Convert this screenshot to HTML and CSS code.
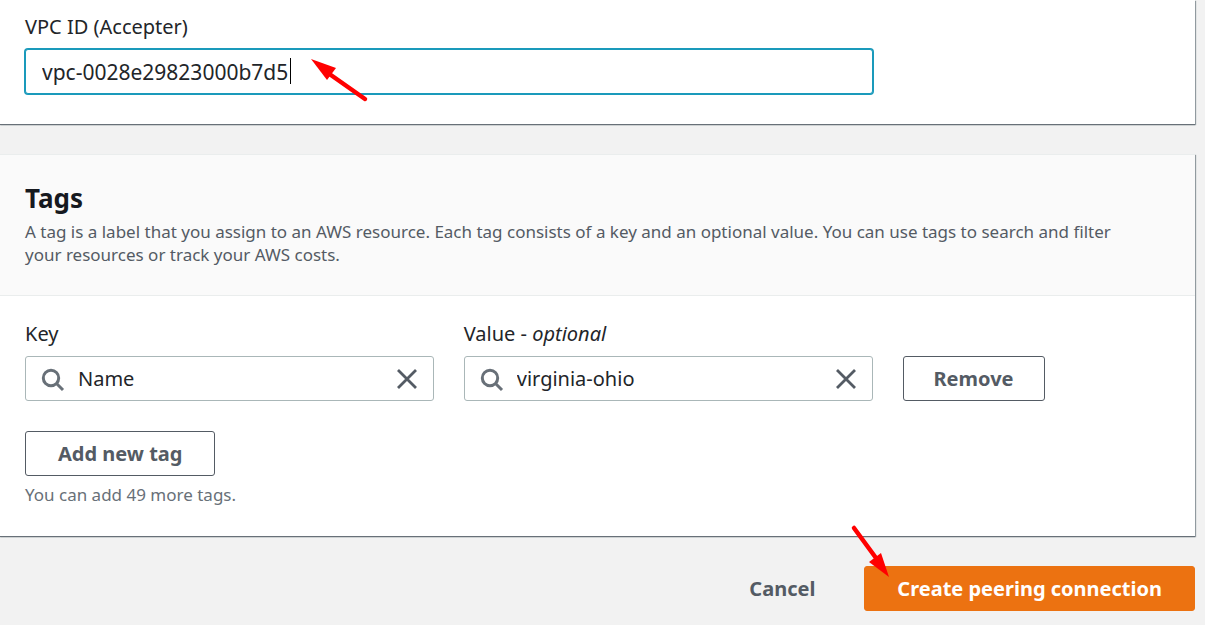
FILE: index.html
```html
<!DOCTYPE html>
<html lang="en">
<head>
<meta charset="utf-8">
<meta name="viewport" content="width=device-width, initial-scale=1">
<title>Create peering connection</title>
<link rel="stylesheet" href="styles.css">
</head>
<body>
<form class="page">
  <section class="panel accepter">
    <div class="panel-body accepter-grid">
      <div class="field">
        <label class="label" for="vpc">VPC ID (Accepter)</label>
        <div class="control">
          <input class="input input-focused" id="vpc" type="text" value="vpc-0028e29823000b7d5">
          <span class="caret"></span>
          <svg class="arrow arrow-field" viewBox="0 0 58 44" aria-hidden="true">
            <path d="M54 40 17 14" stroke="#f00" stroke-width="4.5" stroke-linecap="round"/>
            <path d="M0 0 25 9 16 21Z" fill="#f00"/>
          </svg>
        </div>
      </div>
    </div>
  </section>

  <section class="panel">
    <header class="panel-header">
      <h2 class="title">Tags</h2>
      <p class="description">A tag is a label that you assign to an AWS resource. Each tag consists of a key and an optional value. You can use tags to search and filter your resources or track your AWS costs.</p>
    </header>
    <div class="panel-body">
      <div class="tag-grid">
        <div class="field">
          <label class="label" for="key">Key</label>
          <div class="control">
            <svg class="search" viewBox="0 0 24 24" aria-hidden="true"><circle cx="10" cy="10" r="7.7"/><path d="M15.5 15.5 22 22"/></svg>
            <input class="input input-search" id="key" type="text" value="Name">
            <button class="clear" type="button" aria-label="Clear key"><svg class="cross" viewBox="0 0 22 22" aria-hidden="true"><path d="M2 2 20 20M20 2 2 20"/></svg></button>
          </div>
        </div>
        <div class="field">
          <label class="label" for="value">Value - <em>optional</em></label>
          <div class="control">
            <svg class="search" viewBox="0 0 24 24" aria-hidden="true"><circle cx="10" cy="10" r="7.7"/><path d="M15.5 15.5 22 22"/></svg>
            <input class="input input-search" id="value" type="text" value="virginia-ohio">
            <button class="clear" type="button" aria-label="Clear value"><svg class="cross" viewBox="0 0 22 22" aria-hidden="true"><path d="M2 2 20 20M20 2 2 20"/></svg></button>
          </div>
        </div>
        <button class="button remove" type="button">Remove</button>
      </div>
      <button class="button" type="button">Add new tag</button>
      <p class="hint">You can add 49 more tags.</p>
    </div>
  </section>

  <footer class="actions">
    <button class="button button-link" type="button">Cancel</button>
    <div class="control">
      <button class="button button-primary" type="button">Create peering connection</button>
      <svg class="arrow arrow-submit" viewBox="0 0 42 54" aria-hidden="true">
        <path d="M4 4 26 34" stroke="#f00" stroke-width="4.5" stroke-linecap="round"/>
        <path d="M39 53 19 38 31 29Z" fill="#f00"/>
      </svg>
    </div>
  </footer>
</form>
</body>
</html>
```
FILE: styles.css
```css
* { box-sizing: border-box; }

body {
  margin: 0;
  background: #f2f2f2;
  color: #222529;
  font-family: "Noto Sans", "Open Sans", sans-serif;
  font-size: 20px;
  line-height: 30px;
}

.page {
  display: flex;
  flex-direction: column;
  gap: 30px;
  padding: 0 10px 14px 0;
}

.panel {
  background: #fff;
  border-top: 1px solid #eaeded;
  box-shadow: 0 1px 1px #687078, 1px 1px 1px #9ba3a8;
}

.accepter { border-top: 0; }

.panel-header {
  padding: 28px 25px 29px;
  background: #fafafa;
  border-bottom: 1px solid #eaeded;
}

.title {
  margin: 0 0 6px;
  color: #16191f;
  font-size: 26px;
  line-height: 31px;
}

.description {
  margin: 0;
  padding-right: 25px;
  color: #545b64;
  font-size: 17px;
  line-height: 23px;
}

.panel-body { padding: 23px 20px 30px 25px; }
.accepter .panel-body { padding-top: 12px; }

.accepter-grid,
.tag-grid {
  display: grid;
  grid-template-columns: 3fr 3fr 2fr;
  column-gap: 30px;
}

.accepter-grid .field { grid-column: span 2; }

.tag-grid {
  align-items: end;
  margin-bottom: 30px;
}

.field {
  display: flex;
  flex-direction: column;
  gap: 7px;
}

.control {
  position: relative;
  display: flex;
}

.input {
  width: 100%;
  height: 45px;
  padding: 0 16px;
  border: 1px solid #aab7b8;
  border-radius: 3px;
  background: #fff;
  color: inherit;
  font: inherit;
  outline: 0;
}

.input-focused {
  border-color: #1a9abb;
  box-shadow: 0 0 0 1px #1a9abb;
  font-size: 21px;
}

.input-search { padding: 0 52px; }

.caret {
  position: absolute;
  top: 9px;
  left: 265px;
  width: 1px;
  height: 26px;
  background: #000;
}

.search {
  position: absolute;
  top: 12px;
  left: 16px;
  width: 24px;
  height: 24px;
  fill: none;
  stroke: #687078;
  stroke-width: 3;
}

.clear {
  position: absolute;
  top: 12px;
  right: 16px;
  display: flex;
  padding: 0;
  border: 0;
  background: none;
}

.cross {
  width: 22px;
  height: 22px;
  fill: none;
  stroke: #545b64;
  stroke-width: 2.8;
}

.button {
  height: 45px;
  padding: 0 32px;
  border: 1px solid #545b64;
  border-radius: 3px;
  background: #fff;
  color: #545b64;
  font: inherit;
  font-weight: 700;
  white-space: nowrap;
}

.remove {
  justify-self: start;
  padding: 0 30px;
}

.hint {
  margin: 7px 0 0;
  color: #687078;
  font-size: 17px;
  line-height: 23px;
}

.actions {
  display: flex;
  justify-content: flex-end;
  gap: 16px;
}

.button-link {
  border-color: transparent;
  background: transparent;
}

.button-primary {
  border-color: #ec7211;
  background: #ec7211;
  color: #fff;
}

.arrow {
  position: absolute;
  fill: none;
}

.arrow-field {
  top: 10px;
  left: 286px;
  width: 58px;
  height: 44px;
}

.arrow-submit {
  top: -42px;
  left: -14px;
  width: 42px;
  height: 54px;
}
```
